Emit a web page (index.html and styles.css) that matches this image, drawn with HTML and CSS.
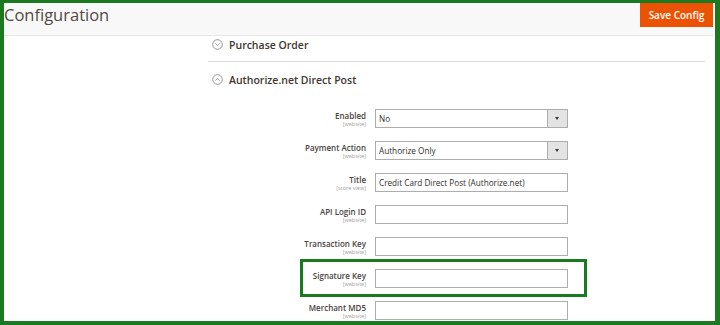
FILE: index.html
```html
<!DOCTYPE html>
<html lang="en">
<head>
    <meta charset="UTF-8">
    <title>Configuration</title>
    <link rel="stylesheet" href="styles.css">
</head>
<body>
    <div class="frame">
        <div class="pageHeader">
            <h1 class="pageTitle">Configuration</h1>
            <button class="saveBtn">Save Config</button>
        </div>

        <div class="content">
            <div class="section">
                <div class="sectionHead">
                    <span class="toggle">
                        <svg width="11" height="11" viewBox="0 0 11 11"><circle cx="5.5" cy="5.5" r="4.8" fill="none" stroke="#8a8a8a" stroke-width="0.9"/><path d="M3.4 4.6 L5.5 6.6 L7.6 4.6" fill="none" stroke="#8a8a8a" stroke-width="0.9"/></svg>
                    </span>
                    Purchase Order
                </div>
            </div>

            <div class="section open">
                <div class="sectionHead">
                    <span class="toggle">
                        <svg width="11" height="11" viewBox="0 0 11 11"><circle cx="5.5" cy="5.5" r="4.8" fill="none" stroke="#8a8a8a" stroke-width="0.9"/><path d="M3.4 6.4 L5.5 4.4 L7.6 6.4" fill="none" stroke="#8a8a8a" stroke-width="0.9"/></svg>
                    </span>
                    Authorize.net Direct Post
                </div>

                <div class="fields">
                    <div class="field">
                        <div class="label">Enabled<span class="scope">[website]</span></div>
                        <div class="select"><span>No</span><span class="arrow"></span></div>
                    </div>
                    <div class="field">
                        <div class="label">Payment Action<span class="scope">[website]</span></div>
                        <div class="select"><span>Authorize Only</span><span class="arrow"></span></div>
                    </div>
                    <div class="field">
                        <div class="label">Title<span class="scope">[store view]</span></div>
                        <div class="input">Credit Card Direct Post (Authorize.net)</div>
                    </div>
                    <div class="field">
                        <div class="label">API Login ID<span class="scope">[website]</span></div>
                        <div class="input"></div>
                    </div>
                    <div class="field">
                        <div class="label">Transaction Key<span class="scope">[website]</span></div>
                        <div class="input"></div>
                    </div>
                    <div class="field highlight">
                        <div class="label">Signature Key<span class="scope">[website]</span></div>
                        <div class="input"></div>
                    </div>
                    <div class="field">
                        <div class="label">Merchant MD5<span class="scope">[website]</span></div>
                        <div class="input"></div>
                    </div>
                </div>
            </div>
        </div>
    </div>
</body>
</html>
```

FILE: styles.css
```css
body {
    margin: 0;
    background: #fff;
    font-family: 'Open Sans', 'Liberation Sans', sans-serif;
    color: #41362f;
}
.frame {
    box-sizing: border-box;
    width: 720px;
    height: 325px;
    border: solid #1b7a1f;
    border-width: 3px 5px 4px 4px;
    overflow: hidden;
}
.pageHeader {
    display: flex;
    justify-content: space-between;
    align-items: flex-start;
    height: 32px;
    background: #f8f8f8;
    border-bottom: 1px solid #e6e6e6;
    margin-right: 2px;
}
.pageTitle {
    margin: 0;
    font-size: 16.5px;
    font-weight: 400;
    line-height: 24px;
    color: #514943;
}
.saveBtn {
    border: none;
    background: #eb5202;
    color: #fff;
    font-family: inherit;
    font-weight: 600;
    font-size: 10px;
    width: 73px;
    height: 24px;
    padding: 0;
}
.content {
    padding-left: 204px;
    padding-right: 10px;
}
.section {
    border-bottom: 1px solid #dcdcdc;
}
.section.open {
    border-bottom: none;
}
.sectionHead {
    display: flex;
    align-items: center;
    height: 17px;
    padding: 0 0 0 4px;
    font-size: 10.5px;
    font-weight: 600;
    color: #41362f;
    margin: 0;
}
.section:first-child .sectionHead {
    margin: 0 0 8px;
}
.section.open .sectionHead {
    margin: 9px 0 21px;
}
.toggle {
    display: inline-flex;
    width: 11px;
    margin-right: 6px;
}
.fields {
    display: flex;
    flex-direction: column;
}
.field {
    display: flex;
    align-items: flex-start;
    height: 32px;
}
.label {
    width: 158px;
    text-align: right;
    font-size: 8px;
    font-weight: 600;
    line-height: 11px;
    padding-top: 1px;
    color: #4a4340;
}
.scope {
    display: block;
    font-size: 5.5px;
    font-weight: 400;
    line-height: 7px;
    color: #a0a0a0;
}
.select, .input {
    box-sizing: border-box;
    margin-left: 9px;
    width: 193px;
    height: 19px;
    border: 1px solid #adadad;
    font-size: 8.2px;
    line-height: 17px;
    padding-left: 3px;
    color: #303030;
}
.select {
    display: flex;
    justify-content: space-between;
    padding-right: 0;
}
.arrow {
    width: 19px;
    background: #e3e3e3;
    border-left: 1px solid #adadad;
    position: relative;
}
.arrow::after {
    content: "";
    position: absolute;
    left: 7px;
    top: 7px;
    border-left: 2.5px solid transparent;
    border-right: 2.5px solid transparent;
    border-top: 3px solid #41362f;
}
.field.highlight {
    box-sizing: border-box;
    height: 38px;
    margin: -10px 0 4px 92px;
    width: 287px;
    border: 3px solid #1b7a1f;
    padding-top: 7px;
}
.field.highlight .label {
    width: 63px;
}
```
